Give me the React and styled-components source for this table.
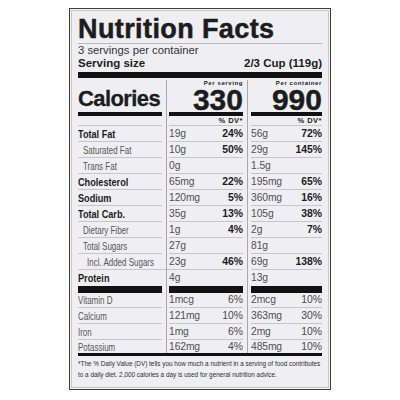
import React from 'react';
import styled, { createGlobalStyle } from 'styled-components';

const Global = createGlobalStyle`
  html, body { margin: 0; padding: 0; background: #ffffff; }
  body { font-family: "Liberation Sans", Arial, sans-serif; }
`;

const SANS = `"Liberation Sans", Arial, sans-serif`;

const Page = styled.div`
  width: 400px;
  height: 400px;
  box-sizing: border-box;
  padding-top: 8px;
  display: flex;
  justify-content: center;
  align-items: flex-start;
`;

const Label = styled.section`
  width: 262px;
  height: 382px;
  box-sizing: border-box;
  border: 1px solid #3f3b2b;
  background: #efeef3;
  box-shadow: inset 0 0 0 1px #f7f7f9, inset 0 0 0 2px #c6c5cb;
  padding: 7px 8px 0 8px;
  display: flex;
  flex-direction: column;
  color: #1c1c1c;
`;

const Title = styled.h1`
  margin: 0;
  font: 700 27px/27px ${SANS};
  letter-spacing: 0.4px;
  -webkit-text-stroke: 0.5px #1c1c1c;
  color: #1c1c1c;
  border-bottom: 1px solid #b9b8be;
`;

const Servings = styled.div`
  font: 400 11.3px/13px ${SANS};
  color: #333;
`;

const SizeRow = styled.div`
  display: flex;
  justify-content: space-between;
  font: 700 11.5px/13px ${SANS};
  color: #1c1c1c;
`;

const Bar = styled.div`
  height: ${p => p.$h}px;
  margin-top: ${p => p.$mt || 0}px;
  background: #121212;
`;

const Table = styled.div`
  margin-top: 2px;
  display: flex;
  flex-direction: column;
`;

const Row = styled.div`
  display: grid;
  grid-template-columns: 88px 81px 75px;
`;

const Cell = styled.div`
  display: flex;
  padding: ${p => (p.$col === 0 ? '0 4px 0 0' : p.$col === 1 ? '0 4px 0 2px' : '0 0 0 3px')};
  border-left: ${p => (p.$col === 0 ? 'none' : '1px solid #a9a8ad')};
`;

const Line = styled.div`
  flex: 1;
  height: ${p => p.$h}px;
  box-sizing: border-box;
  display: flex;
  align-items: center;
  justify-content: space-between;
  border-bottom: ${p => (p.$rule ? `${p.$rule}px solid ${p.$rule > 1 ? '#121212' : '#c6c5cb'}` : 'none')};
`;

const CalStack = styled.div`
  flex: 1;
  height: 36px;
  box-sizing: border-box;
  display: flex;
  flex-direction: column;
  align-items: ${p => (p.$end ? 'flex-end' : 'flex-start')};
  justify-content: flex-end;
  border-bottom: 4px solid #121212;
`;

const Small = styled.div`
  font: 700 6px/7px ${SANS};
  letter-spacing: 0.6px;
  color: #222;
`;

const Big = styled.div`
  font: 700 30px/25px ${SANS};
  -webkit-text-stroke: 0.4px #1c1c1c;
  color: #1c1c1c;
`;

const CalWord = styled.div`
  font: 700 22px/24px ${SANS};
  letter-spacing: -0.6px;
  -webkit-text-stroke: 0.3px #1c1c1c;
  color: #1c1c1c;
  padding-bottom: 1px;
`;

const DV = styled.span`
  margin-left: auto;
  font: 700 7.5px/9px ${SANS};
  letter-spacing: 0.5px;
  color: #222;
`;

/* condensed face: the label uses Helvetica Condensed, approximated by a horizontal squeeze */
const Name = styled.span`
  display: inline-block;
  font: ${p => (p.$bold ? 700 : 400)} 10.5px/12px ${SANS};
  color: ${p => (p.$bold ? '#1c1c1c' : '#555')};
  margin-left: ${p => p.$indent * 4.5}px;
  white-space: nowrap;
  transform: scaleX(${p => (p.$bold ? 0.87 : 0.76)});
  transform-origin: left center;
`;

const Amount = styled.span`
  font: 400 10.3px/12px ${SANS};
  letter-spacing: -0.1px;
  color: #505050;
`;

const Pct = styled.span`
  font: ${p => (p.$bold ? 700 : 400)} 10.4px/12px ${SANS};
  color: ${p => (p.$bold ? '#1c1c1c' : '#4a4a4a')};
`;

const Footnote = styled.p`
  margin: 2px 0 0 0;
  width: 285px;
  font: 400 7.5px/11px ${SANS};
  color: #2e2e2e;
  white-space: nowrap;
  transform: scaleX(0.85);
  transform-origin: left top;
`;

const nutrients = [
  { name: 'Total Fat', bold: true, s: ['19g', '24%'], c: ['56g', '72%'] },
  { name: 'Saturated Fat', indent: 1, s: ['10g', '50%'], c: ['29g', '145%'] },
  { name: 'Trans Fat', indent: 1, s: ['0g', ''], c: ['1.5g', ''] },
  { name: 'Cholesterol', bold: true, s: ['65mg', '22%'], c: ['195mg', '65%'] },
  { name: 'Sodium', bold: true, s: ['120mg', '5%'], c: ['360mg', '16%'] },
  { name: 'Total Carb.', bold: true, s: ['35g', '13%'], c: ['105g', '38%'] },
  { name: 'Dietary Fiber', indent: 1, s: ['1g', '4%'], c: ['2g', '7%'] },
  { name: 'Total Sugars', indent: 1, s: ['27g', ''], c: ['81g', ''] },
  { name: 'Incl. Added Sugars', indent: 2, s: ['23g', '46%'], c: ['69g', '138%'] },
  { name: 'Protein', bold: true, s: ['4g', ''], c: ['13g', ''], last: true },
];

const vitamins = [
  { name: 'Vitamin D', s: ['1mcg', '6%'], c: ['2mcg', '10%'] },
  { name: 'Calcium', s: ['121mg', '10%'], c: ['363mg', '30%'] },
  { name: 'Iron', s: ['1mg', '6%'], c: ['2mg', '10%'] },
  { name: 'Potassium', s: ['162mg', '4%'], c: ['485mg', '10%'], last: true },
];

function DataRow({ item, h, rule, pctBold }) {
  return (
    <Row>
      <Cell $col={0}>
        <Line $h={h} $rule={rule}>
          <Name $bold={item.bold} $indent={item.indent || 0}>{item.name}</Name>
        </Line>
      </Cell>
      {[item.s, item.c].map((v, i) => (
        <Cell $col={i + 1} key={i}>
          <Line $h={h} $rule={rule}>
            <Amount>{v[0]}</Amount>
            <Pct $bold={pctBold}>{v[1]}</Pct>
          </Line>
        </Cell>
      ))}
    </Row>
  );
}

export default function App() {
  return (
    <>
      <Global />
      <Page>
        <Label>
          <Title>Nutrition Facts</Title>
          <Servings>3 servings per container</Servings>
          <SizeRow>
            <span>Serving size</span>
            <span>2/3 Cup (119g)</span>
          </SizeRow>
          <Bar $h={6} $mt={2} />
          <Table>
            <Row>
              <Cell $col={0}>
                <CalStack>
                  <CalWord>Calories</CalWord>
                </CalStack>
              </Cell>
              <Cell $col={1}>
                <CalStack $end>
                  <Small>Per serving</Small>
                  <Big>330</Big>
                </CalStack>
              </Cell>
              <Cell $col={2}>
                <CalStack $end>
                  <Small>Per container</Small>
                  <Big>990</Big>
                </CalStack>
              </Cell>
            </Row>
            <Row>
              <Cell $col={0}>
                <Line $h={10} $rule={1} />
              </Cell>
              <Cell $col={1}>
                <Line $h={10} $rule={1}>
                  <DV>% DV*</DV>
                </Line>
              </Cell>
              <Cell $col={2}>
                <Line $h={10} $rule={1}>
                  <DV>% DV*</DV>
                </Line>
              </Cell>
            </Row>
            {nutrients.map(n => (
              <DataRow key={n.name} item={n} h={n.last ? 23 : 16} rule={n.last ? 7 : 1} pctBold />
            ))}
            {vitamins.map((v, i) => (
              <DataRow
                key={v.name}
                item={v}
                h={v.last ? 13 : i === 0 ? 15 : 16}
                rule={v.last ? 0 : 1}
              />
            ))}
          </Table>
          <Bar $h={3} />
          <Footnote>
            *The % Daily Value (DV) tells you how much a nutrient in a serving of food contributes
            <br />
            to a daily diet. 2,000 calories a day is used for general nutrition advice.
          </Footnote>
        </Label>
      </Page>
    </>
  );
}
